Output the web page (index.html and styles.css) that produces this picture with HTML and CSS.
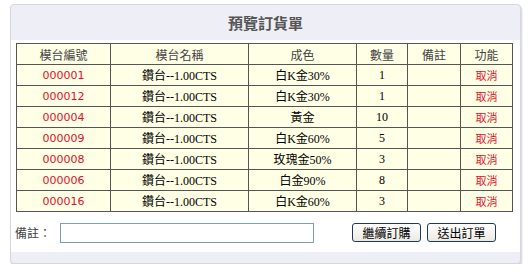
FILE: index.html
```html
<!DOCTYPE html>
<html lang="zh-Hant">
<head>
    <meta charset="UTF-8">
    <title>預覽訂貨單</title>
    <link rel="stylesheet" href="styles.css">
</head>
<body>
    <div class="panel">
        <div class="panel-head">預覽訂貨單</div>
        <div class="panel-body">
            <table class="order">
                <thead>
                    <tr>
                        <th class="c-id">模台編號</th>
                        <th class="c-name">模台名稱</th>
                        <th class="c-color">成色</th>
                        <th class="c-qty">數量</th>
                        <th class="c-note">備註</th>
                        <th class="c-fn">功能</th>
                    </tr>
                </thead>
                <tbody>
                    <tr><td class="red">000001</td><td>鑽台--1.00CTS</td><td>白K金30%</td><td>1</td><td></td><td class="red">取消</td></tr>
                    <tr><td class="red">000012</td><td>鑽台--1.00CTS</td><td>白K金30%</td><td>1</td><td></td><td class="red">取消</td></tr>
                    <tr><td class="red">000004</td><td>鑽台--1.00CTS</td><td>黃金</td><td>10</td><td></td><td class="red">取消</td></tr>
                    <tr><td class="red">000009</td><td>鑽台--1.00CTS</td><td>白K金60%</td><td>5</td><td></td><td class="red">取消</td></tr>
                    <tr><td class="red">000008</td><td>鑽台--1.00CTS</td><td>玫瑰金50%</td><td>3</td><td></td><td class="red">取消</td></tr>
                    <tr><td class="red">000006</td><td>鑽台--1.00CTS</td><td>白金90%</td><td>8</td><td></td><td class="red">取消</td></tr>
                    <tr><td class="red">000016</td><td>鑽台--1.00CTS</td><td>白K金60%</td><td>3</td><td></td><td class="red">取消</td></tr>
                </tbody>
            </table>
            <div class="form-row">
                <label class="note-label">備註：</label>
                <input type="text" class="note-input">
                <button class="btn btn-first">繼續訂購</button>
                <button class="btn">送出訂單</button>
            </div>
        </div>
        <div class="panel-foot"></div>
    </div>
</body>
</html>
```

FILE: styles.css
```css
body {
    margin: 0;
    background: #fff;
    font-family: "Liberation Serif", "Noto Sans CJK TC", serif;
    font-size: 12px;
    color: #000;
}
.panel {
    margin: 4px 0 0 10px;
    width: 509px;
    border: 1px solid #d6d6e2;
    border-radius: 4px;
    background: #eeeef6;
    box-shadow: 1px 2px 2px #d0d0d8;
}
.panel-head {
    height: 35px;
    line-height: 35px;
    text-align: center;
    font-family: "Noto Sans CJK TC", sans-serif;
    font-size: 15px;
    font-weight: bold;
    color: #555;
}
.panel-body {
    background: #fff;
    padding: 3px 5px 9px 5px;
}
.order {
    width: 497px;
    border-collapse: collapse;
    background: #ffffe6;
}
.order th,
.order td {
    border: 1px solid #555;
    height: 20px;
    padding: 0;
    text-align: center;
    font-weight: normal;
}
.order th {
    font-family: "Noto Sans CJK TC", sans-serif;
    color: #444;
}
.c-id { width: 93px; }
.c-name { width: 137px; }
.c-color { width: 107px; }
.c-qty { width: 50px; }
.c-note { width: 52px; }
.red {
    color: #e0102a;
    font-family: "DejaVu Sans", "Noto Sans CJK TC", sans-serif;
    font-size: 11px;
}
.form-row {
    display: flex;
    align-items: center;
    margin-top: 10px;
    height: 21px;
}
.note-label {
    font-family: "Noto Sans CJK TC", sans-serif;
    color: #444;
    width: 45px;
    margin-left: -1px;
}
.note-input {
    width: 252px;
    height: 18px;
    margin: 0;
    padding: 0;
    border: 1px solid #7f9db9;
}
.btn {
    width: 69px;
    height: 19px;
    padding: 0;
    border: 1px solid #1c3a5a;
    border-radius: 3px;
    background: linear-gradient(#fff, #ece9e2);
    font-family: "Noto Sans CJK TC", sans-serif;
    font-size: 12px;
    color: #000;
    margin-left: 6px;
}
.btn-first {
    margin-left: 38px;
}
.panel-foot {
    height: 11px;
}
```
